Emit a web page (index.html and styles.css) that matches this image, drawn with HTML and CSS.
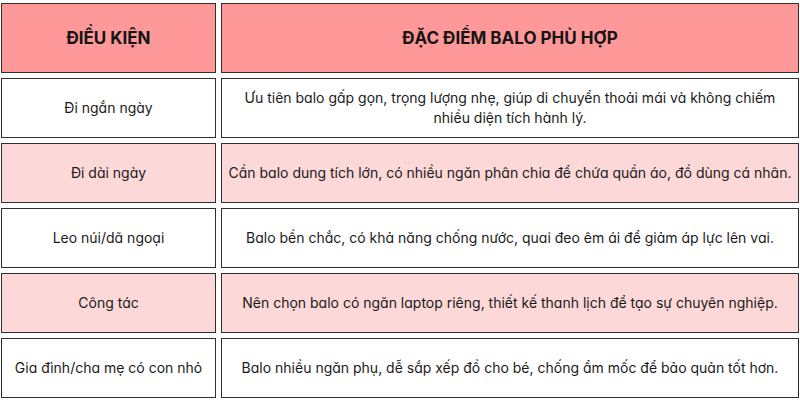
FILE: index.html
```html
<!DOCTYPE html>
<html lang="vi">
<head>
<meta charset="utf-8">
<link rel="stylesheet" href="styles.css">
</head>
<body>
<div class="table">
  <div class="cell head">ĐIỀU KIỆN</div>
  <div class="cell head">ĐẶC ĐIỂM BALO PHÙ HỢP</div>

  <div class="cell">Đi ngắn ngày</div>
  <div class="cell desc">Ưu tiên balo gấp gọn, trọng lượng nhẹ, giúp di chuyển thoải mái và không chiếm nhiều diện tích hành lý.</div>

  <div class="cell pink">Đi dài ngày</div>
  <div class="cell desc pink">Cần balo dung tích lớn, có nhiều ngăn phân chia để chứa quần áo, đồ dùng cá nhân.</div>

  <div class="cell">Leo núi/dã ngoại</div>
  <div class="cell desc">Balo bền chắc, có khả năng chống nước, quai đeo êm ái để giảm áp lực lên vai.</div>

  <div class="cell pink">Công tác</div>
  <div class="cell desc pink">Nên chọn balo có ngăn laptop riêng, thiết kế thanh lịch để tạo sự chuyên nghiệp.</div>

  <div class="cell">Gia đình/cha mẹ có con nhỏ</div>
  <div class="cell desc">Balo nhiều ngăn phụ, dễ sắp xếp đồ cho bé, chống ẩm mốc để bảo quản tốt hơn.</div>
</div>
</body>
</html>
```

FILE: styles.css
```css
html, body {
  margin: 0;
  padding: 0;
  background: #ffffff;
}

body {
  font-family: "Inter", "Noto Sans", sans-serif;
  font-feature-settings: "cv11";
  color: #1a1a1a;
}

.table {
  display: grid;
  grid-template-columns: 215px 578px;
  grid-template-rows: 70px repeat(5, 60px);
  gap: 5px;
  padding: 3px 1px;
}

.cell {
  box-sizing: border-box;
  border: 1.5px solid #2e2e2e;
  background: #ffffff;
  display: flex;
  align-items: center;
  justify-content: center;
  text-align: center;
  font-size: 14px;
  line-height: 20px;
  padding: 0 6px;
}

.head {
  background: #ff9899;
  font-weight: 700;
  font-size: 17px;
  color: #151515;
}

.pink {
  background: #fdd8d9;
}

.desc {
  padding: 0 4px;
}
```
